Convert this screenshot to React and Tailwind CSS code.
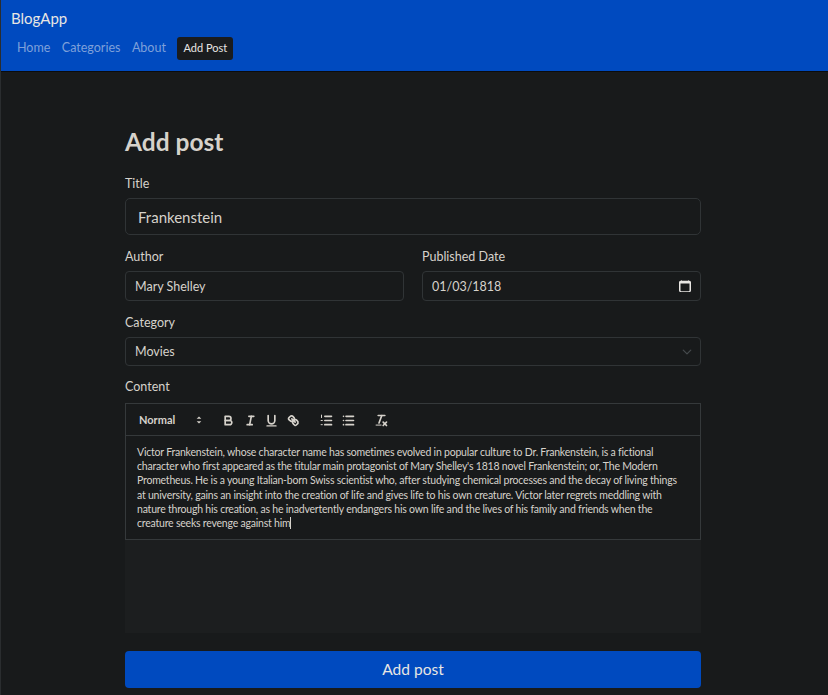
const labelCls = 'block text-[12.5px] leading-[18px] text-[#d6d2cb] mb-[5px]';
const inputCls = 'w-full h-[30px] px-[9px] text-[12.5px] bg-transparent border border-[#303436] rounded-[4px] text-[#d6d2cb] outline-none';

const Ic = ({ children }) => (
  <svg viewBox="0 0 18 18" className="w-[15px] h-[15px]" fill="none" stroke="#d6d2cb" strokeWidth="2" strokeLinecap="round" strokeLinejoin="round">
    {children}
  </svg>
);

const Btn = ({ className = '', children }) => (
  <button type="button" className={`w-[21.5px] h-[18px] flex items-center justify-center shrink-0 ${className}`}>
    <Ic>{children}</Ic>
  </button>
);

const Toolbar = () => (
  <div className="h-[32px] flex items-center pl-[13px] pt-[1px] border-b border-[#35393b]">
    <span className="text-[11px] text-[#d6d2cb] font-bold w-[53px]">Normal</span>
    <svg viewBox="0 0 18 18" className="w-[14px] h-[14px] mr-[12px]" fill="#d6d2cb">
      <polygon points="6 10.5 9 13.5 12 10.5" />
      <polygon points="6 7.5 9 4.5 12 7.5" />
    </svg>
    <Btn>
      <path d="M5,4H9.5A2.5,2.5,0,0,1,12,6.5v0A2.5,2.5,0,0,1,9.5,9H5V4Z" />
      <path d="M5,9h5.5A2.5,2.5,0,0,1,13,11.5v0A2.5,2.5,0,0,1,10.5,14H5V9Z" />
    </Btn>
    <Btn>
      <line x1="7" x2="13" y1="4" y2="4" />
      <line x1="5" x2="11" y1="14" y2="14" />
      <line x1="8" x2="10" y1="14" y2="4" />
    </Btn>
    <Btn>
      <path d="M5,3V9a4,4,0,0,0,4,4H9a4,4,0,0,0,4-4V3" />
      <line x1="3.5" x2="14.5" y1="15.5" y2="15.5" strokeWidth="1.4" />
    </Btn>
    <Btn>
      <line x1="7" x2="11" y1="7" y2="11" />
      <path d="M8.9,4.577a3.476,3.476,0,0,1,.36,4.679A3.476,3.476,0,0,1,4.577,8.9C3.185,7.5,2.331,6.958,3.64,5.64L5.64,3.64A3.476,3.476,0,0,1,8.9,4.577Z" />
      <path d="M13.423,9.1a3.476,3.476,0,0,0-4.679-.36,3.476,3.476,0,0,0,.36,4.679c1.392,1.392,1.935,2.246,3.227.955l2-2A3.476,3.476,0,0,0,13.423,9.1Z" />
    </Btn>
    <div className="w-[12px] shrink-0" />
    <Btn>
      <line x1="7" x2="15" y1="4" y2="4" />
      <line x1="7" x2="15" y1="9" y2="9" />
      <line x1="7" x2="15" y1="14" y2="14" />
      <line x1="3" x2="3" y1="2.5" y2="5.5" strokeWidth="1.2" />
      <line x1="2.5" x2="4" y1="9" y2="9" strokeWidth="1.2" />
      <line x1="2.5" x2="4" y1="14" y2="14" strokeWidth="1.2" />
    </Btn>
    <Btn>
      <line x1="6" x2="15" y1="4" y2="4" />
      <line x1="6" x2="15" y1="9" y2="9" />
      <line x1="6" x2="15" y1="14" y2="14" />
      <line x1="3" x2="3" y1="4" y2="4" />
      <line x1="3" x2="3" y1="9" y2="9" />
      <line x1="3" x2="3" y1="14" y2="14" />
    </Btn>
    <div className="w-[12px] shrink-0" />
    <Btn>
      <line x1="5" x2="13" y1="3" y2="3" />
      <line x1="6" x2="9.35" y1="12" y2="3" />
      <line x1="11" x2="15" y1="11" y2="15" />
      <line x1="15" x2="11" y1="11" y2="15" />
      <line x1="2.5" x2="8.5" y1="14.5" y2="14.5" strokeWidth="1.2" />
    </Btn>
  </div>
);

export default function App() {
  return (
    <div className="w-[828px] h-[695px] overflow-hidden bg-[#181a1b] text-[#d6d2cb] border-l border-[#2a2d2f]" style={{ fontFamily: 'Lato, "Noto Sans", sans-serif' }}>
      <nav className="h-[72px] bg-[#004abf] border-b border-[#0b0c0d] pl-[10px] pt-[9px]">
        <div className="text-[15px] leading-[18px] text-[#e8e6e3]">BlogApp</div>
        <div className="flex items-center mt-[10px] pl-[6px] gap-[11.5px]">
          <a className="text-[12.5px] text-[#7ea0da]">Home</a>
          <a className="text-[12.5px] text-[#7ea0da]">Categories</a>
          <a className="text-[12.5px] text-[#7ea0da]">About</a>
          <button type="button" className="w-[56px] h-[23px] bg-[#1a1c1e] rounded-[3px] text-[11px] text-[#e8e6e3]">Add Post</button>
        </div>
      </nav>

      <main className="w-[576px] ml-[124px] pt-[52px]">
        <h1 className="text-[24.5px] leading-[36px] font-bold text-[#d6d2cb] mb-[15px]">Add post</h1>

        <div className="mb-[13px]">
          <label className={labelCls}>Title</label>
          <input readOnly value="Frankenstein" className="w-full h-[37px] px-[12px] text-[15px] bg-transparent border border-[#303436] rounded-[5px] text-[#d6d2cb] outline-none" />
        </div>

        <div className="grid grid-cols-2 gap-[18px] mb-[13px]">
          <div>
            <label className={labelCls}>Author</label>
            <input readOnly value="Mary Shelley" className={inputCls} />
          </div>
          <div>
            <label className={labelCls}>Published Date</label>
            <div className="relative">
              <input readOnly value="01/03/1818" className={inputCls} />
              <svg viewBox="0 0 16 16" className="absolute right-[10px] top-[9px] w-[12px] h-[12px]" fill="#e8e6e3">
                <path d="M3.5 0a.5.5 0 0 1 .5.5V1h8V.5a.5.5 0 0 1 1 0V1h1a2 2 0 0 1 2 2v11a2 2 0 0 1-2 2H2a2 2 0 0 1-2-2V3a2 2 0 0 1 2-2h1V.5a.5.5 0 0 1 .5-.5zM2 4.5V14a1 1 0 0 0 1 1h10a1 1 0 0 0 1-1V4.5H2z" />
              </svg>
            </div>
          </div>
        </div>

        <div className="mb-[12px]">
          <label className={labelCls}>Category</label>
          <div className="relative">
            <input readOnly value="Movies" className={`${inputCls} !h-[29px]`} />
            <svg viewBox="0 0 16 16" className="absolute right-[9px] top-[10px] w-[10px] h-[10px]" fill="none" stroke="#45494c" strokeWidth="2" strokeLinecap="round" strokeLinejoin="round">
              <path d="M2 5l6 6 6-6" />
            </svg>
          </div>
        </div>

        <label className={`${labelCls} !mb-[7px]`}>Content</label>
        <div className="bg-[#1c1e1f]">
          <div className="border border-[#35393b] bg-[#181a1b]">
            <Toolbar />
            <div className="px-[11px] pt-[9px] pb-[10px] text-[10.5px] tracking-[-0.21px] leading-[14.2px] text-[#d6d2cb] h-[103px] whitespace-nowrap">
              Victor Frankenstein, whose character name has sometimes evolved in popular culture to Dr. Frankenstein, is a fictional<br />
              character who first appeared as the titular main protagonist of Mary Shelley's 1818 novel Frankenstein; or, The Modern<br />
              Prometheus. He is a young Italian-born Swiss scientist who, after studying chemical processes and the decay of living things<br />
              at university, gains an insight into the creation of life and gives life to his own creature. Victor later regrets meddling with<br />
              nature through his creation, as he inadvertently endangers his own life and the lives of his family and friends when the<br />
              creature seeks revenge against him<span className="inline-block w-px h-[12px] bg-[#d6d2cb] align-[-2px]" />
            </div>
          </div>
          <div className="h-[93px]" />
        </div>

        <button type="button" className="w-full h-[37px] mt-[18px] bg-[#004abf] rounded-[4px] text-[15.5px] text-[#e8e6e3]">Add post</button>
      </main>
    </div>
  );
}
